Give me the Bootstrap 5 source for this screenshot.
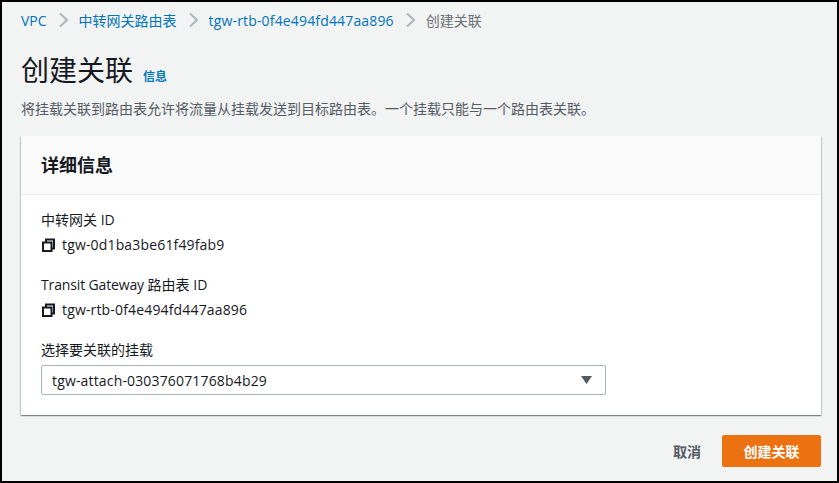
<!DOCTYPE html>
<html lang="zh-CN">
<head>
    <meta charset="UTF-8">
    <meta name="viewport" content="width=device-width, initial-scale=1.0">
    <title>创建关联</title>
    <link href="https://cdn.jsdelivr.net/npm/bootstrap@5.3.0/dist/css/bootstrap.min.css" rel="stylesheet">
    <style>
        html, body {
            height: 100%;
        }
        body {
            background: #000;
            font-family: "Open Sans", "Noto Sans CJK SC", sans-serif;
            font-size: 14px;
            color: #16191f;
            overflow: hidden;
        }
        .screen-frame {
            margin: 2px 2px 0 2px;
            height: 479px;
            background: #f2f3f3;
            padding: 0 16px 0 19px;
        }
        .crumbs {
            height: 36px;
            flex: none;
        }
        .crumbs a {
            color: #0073bb;
            text-decoration: none;
        }
        .crumbs .crumb-now {
            color: #687078;
        }
        .crumb-sep {
            width: 9px;
            height: 14px;
            margin: 0 11px 0 12px;
        }
        .title-row {
            margin-top: 14px;
        }
        .page-title {
            font-size: 28px;
            font-weight: 400;
            line-height: 36px;
            margin: 0;
        }
        .info-link {
            font-size: 12px;
            font-weight: 700;
            color: #0073bb;
            text-decoration: none;
            margin-left: 10px;
        }
        .page-desc {
            color: #545b64;
            margin: 12px 0 0 0;
            line-height: 18px;
            height: 18px;
        }
        .detail-card {
            border: 0;
            border-radius: 0;
            margin-top: 18px;
            height: 279px;
            flex: none;
            box-shadow: 0 1px 1px 0 rgba(0, 28, 36, .3), 1px 1px 1px 0 rgba(0, 28, 36, .15), -1px 1px 1px 0 rgba(0, 28, 36, .15);
        }
        .detail-card .card-header {
            background: #fafafa;
            border-bottom: 1px solid #eaeded;
            border-radius: 0;
            height: 59px;
            padding: 0 20px;
            font-size: 18px;
            font-weight: 700;
        }
        .detail-card .card-body {
            padding: 15px 20px 0 20px;
        }
        .field-label {
            line-height: 20px;
            height: 20px;
        }
        .field-next {
            margin-top: 20px;
        }
        .label-tight {
            letter-spacing: -.14px;
        }
        .field-value {
            line-height: 20px;
            margin-top: 5px;
            height: 20px;
        }
        .id-text {
            letter-spacing: .16px;
        }
        .copy-icon {
            width: 13px;
            height: 14px;
            margin: 0 7px 0 1px;
        }
        .attach-select {
            width: 565px;
            height: 30px;
            margin-top: 5px;
            padding: 0 10px;
            font-size: 14px;
            color: #16191f;
            border: 1px solid #aab7b8;
            border-radius: 2px;
            background-color: #fff;
            background-image: url("data:image/svg+xml,%3Csvg xmlns='http://www.w3.org/2000/svg' width='11' height='8'%3E%3Cpath d='M0 0h11L5.5 8z' fill='%23545b64'/%3E%3C/svg%3E");
            background-position: right 13px center;
            background-size: 11px 8px;
            font-family: inherit;
        }
        .footer-actions {
            margin-top: 20px;
            gap: 21px;
        }
        .btn-cancel {
            color: #545b64;
            font-weight: 700;
            font-size: 14px;
            padding: 0;
            border: 0;
        }
        .btn-create {
            background: #ec7211;
            border: 1px solid #ec7211;
            color: #fff;
            font-size: 14px;
            font-weight: 700;
            width: 99px;
            height: 32px;
            padding: 0;
            border-radius: 2px;
        }
    </style>
</head>
<body>

    <div class="screen-frame d-flex flex-column">
        <!-- Breadcrumb -->
        <nav class="crumbs d-flex align-items-center">
            <a href="#">VPC</a>
            <svg class="crumb-sep" viewBox="0 0 9 14"><path d="M1 .5L8 7l-7 6.5" fill="none" stroke="#aab7b8" stroke-width="2"/></svg>
            <a href="#">中转网关路由表</a>
            <svg class="crumb-sep" viewBox="0 0 9 14"><path d="M1 .5L8 7l-7 6.5" fill="none" stroke="#aab7b8" stroke-width="2"/></svg>
            <a href="#" class="id-text">tgw-rtb-0f4e494fd447aa896</a>
            <svg class="crumb-sep" viewBox="0 0 9 14"><path d="M1 .5L8 7l-7 6.5" fill="none" stroke="#aab7b8" stroke-width="2"/></svg>
            <span class="crumb-now">创建关联</span>
        </nav>

        <div class="title-row d-flex align-items-baseline">
            <h1 class="page-title">创建关联</h1>
            <a href="#" class="info-link">信息</a>
        </div>
        <p class="page-desc">将挂载关联到路由表允许将流量从挂载发送到目标路由表。一个挂载只能与一个路由表关联。</p>

        <!-- 详细信息 -->
        <div class="card detail-card">
            <div class="card-header d-flex align-items-center">详细信息</div>
            <div class="card-body">
                <div class="field-label">中转网关 ID</div>
                <div class="field-value d-flex align-items-center">
                    <svg class="copy-icon" viewBox="0 0 13 14"><path d="M4 4V1.5h8v9H9.5M1 4.5h8.500v8.500H1z" fill="none" stroke="#16191f" stroke-width="2"/></svg>
                    <span class="id-text">tgw-0d1ba3be61f49fab9</span>
                </div>
                <div class="field-label field-next"><span class="label-tight">Transit Gateway</span> 路由表 ID</div>
                <div class="field-value d-flex align-items-center">
                    <svg class="copy-icon" viewBox="0 0 13 14"><path d="M4 4V1.5h8v9H9.5M1 4.5h8.500v8.500H1z" fill="none" stroke="#16191f" stroke-width="2"/></svg>
                    <span class="id-text">tgw-rtb-0f4e494fd447aa896</span>
                </div>
                <div class="field-label field-next">选择要关联的挂载</div>
                <select class="form-select attach-select id-text">
                    <option>tgw-attach-030376071768b4b29</option>
                </select>
            </div>
        </div>

        <div class="footer-actions d-flex justify-content-end align-items-center">
            <button class="btn btn-cancel">取消</button>
            <button class="btn btn-create">创建关联</button>
        </div>
    </div>

</body>
</html>
